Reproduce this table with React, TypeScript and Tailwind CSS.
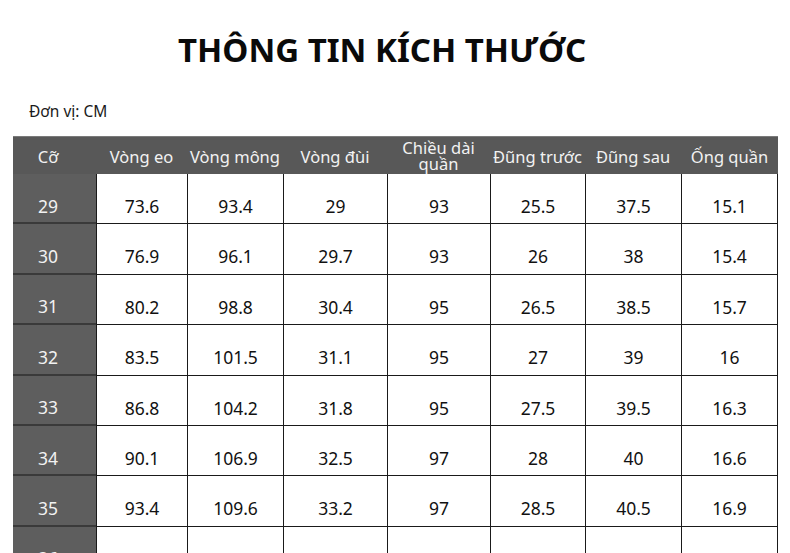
const headers = ["Cỡ", "Vòng eo", "Vòng mông", "Vòng đùi", "Chiều dài quần", "Đũng trước", "Đũng sau", "Ống quần"];

const rows: string[][] = [
  ["29", "73.6", "93.4", "29", "93", "25.5", "37.5", "15.1"],
  ["30", "76.9", "96.1", "29.7", "93", "26", "38", "15.4"],
  ["31", "80.2", "98.8", "30.4", "95", "26.5", "38.5", "15.7"],
  ["32", "83.5", "101.5", "31.1", "95", "27", "39", "16"],
  ["33", "86.8", "104.2", "31.8", "95", "27.5", "39.5", "16.3"],
  ["34", "90.1", "106.9", "32.5", "97", "28", "40", "16.6"],
  ["35", "93.4", "109.6", "33.2", "97", "28.5", "40.5", "16.9"],
  ["36", "96.7", "112.3", "33.9", "97", "29", "41", "17.2"],
];

const cols = "grid grid-cols-[83px_91px_96px_104px_103px_95px_96px_97px]";

export default function App() {
  return (
    <div className="h-[553px] w-[790px] overflow-hidden bg-white font-['Noto_Sans','Open_Sans',sans-serif] text-[#111]">
      <h1 className="pl-[178px] pt-[27px] text-[33px] font-bold leading-[46px] text-[#0a0a0a]">
        THÔNG TIN KÍCH THƯỚC
      </h1>
      <p className="mt-[26px] pl-[29px] text-[15.5px] leading-[24px] text-[#1a1a1a]">Đơn vị: CM</p>

      <div className="ml-[13px] mt-[13px] w-[765px]">
        <div className={`${cols} h-[38px] border-t border-[#7a7a7a] bg-[#585858] text-[16.5px] text-[#f2f2f2]`}>
          {headers.map((h, i) => (
            <div
              key={h}
              className={`flex items-center justify-center text-center ${i === 0 ? "pr-[13px] pt-[3px]" : "pt-[3px]"} ${i === 4 ? "leading-[16px]" : "leading-none"}`}
            >
              {i === 4 ? (
                <span className="-mt-[3px]">
                  Chiều dài
                  <br />
                  quần
                </span>
              ) : (
                h
              )}
            </div>
          ))}
        </div>

        {rows.map((r) => (
          <div key={r[0]} className={`${cols} h-[50.4px]`}>
            {r.map((v, i) =>
              i === 0 ? (
                <div
                  key={i}
                  className="flex items-center justify-center border-b-2 border-[#3a3a3a] bg-[#5e5e5e] pr-[13px] pt-[15px] text-[17.5px] text-[#f2f2f2]"
                >
                  {v}
                </div>
              ) : (
                <div
                  key={i}
                  className="flex items-center justify-center border-b border-l border-[#1a1a1a] pt-[15px] text-[17.5px] last:border-r"
                >
                  {v}
                </div>
              )
            )}
          </div>
        ))}
      </div>
    </div>
  );
}
